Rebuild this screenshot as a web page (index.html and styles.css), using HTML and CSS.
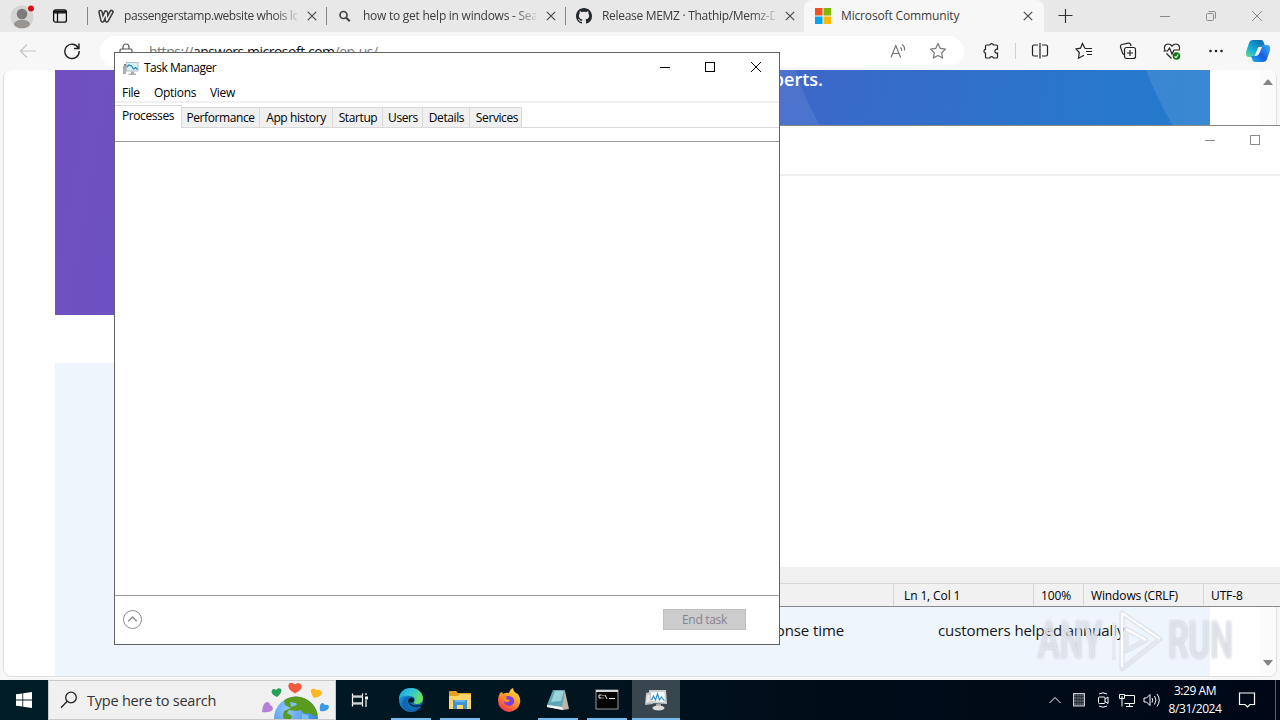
FILE: index.html
```html
<!DOCTYPE html>
<html lang="en">
<head>
    <meta charset="UTF-8">
    <meta name="viewport" content="width=device-width, initial-scale=1.0">
    <title>Desktop</title>
    <link rel="stylesheet" href="styles.css">
</head>
<body>

<div class="desktop">

    <!-- Browser -->
    <div class="window browser">
        <div class="tab-strip">
            <div class="strip-left">
                <svg class="profile" width="26" height="26" viewBox="0 0 26 26">
                    <circle cx="12" cy="14" r="11.5" fill="#d6d4d2"/>
                    <circle cx="12" cy="11" r="5.3" fill="#7d7a78"/>
                    <ellipse cx="12" cy="21" rx="8" ry="4.3" fill="#979492"/>
                    <circle cx="21" cy="5.5" r="3" fill="#d80f1c"/>
                </svg>
                <svg class="workspaces" width="16" height="16" viewBox="0 0 16 16" fill="none" stroke="#111" stroke-width="1.3">
                    <rect x="1.6" y="1.8" width="12.8" height="12.4" rx="2"/>
                    <path d="M2 3.5h12" stroke-width="2"/>
                    <path d="M2 4.8h12M5.500 5v9"/>
                </svg>
            </div>
            <div class="tab">
                <svg class="favicon" width="16" height="16" viewBox="0 0 16 16" fill="none" stroke-linecap="round" stroke-linejoin="round">
                    <path d="M2.500 4l2 8.500L8 4.500l.8 8L13.500 4" stroke="#3c3c3c" stroke-width="4.600"/>
                    <path d="M2.500 4l2 8.500L8 4.500l.8 8L13.500 4" stroke="#eee" stroke-width="1.500"/>
                </svg>
                <span class="tab-title fade t1">passengerstamp.website whois lookup</span>
                <svg class="tab-close" width="10" height="10" viewBox="0 0 10 10"><path d="M.8.8l8.400 8.400M9.200.8L.8 9.200"/></svg>
            </div>
            <div class="tab">
                <svg class="favicon" width="16" height="16" viewBox="0 0 16 16" fill="none" stroke="#444" stroke-width="1.700">
                    <circle cx="6.500" cy="7" r="3.500"/><path d="M9.200 9.700l3.600 3.600" stroke-width="2.200"/>
                </svg>
                <span class="tab-title fade t2">how to get help in windows - Search</span>
                <svg class="tab-close" width="10" height="10" viewBox="0 0 10 10"><path d="M.8.8l8.400 8.400M9.200.8L.8 9.200"/></svg>
            </div>
            <div class="tab">
                <svg class="favicon" width="16" height="16" viewBox="0 0 16 16" fill="#24292f">
                    <path d="M8 0C3.580 0 0 3.580 0 8c0 3.540 2.290 6.530 5.470 7.590.4.070.55-.17.55-.38 0-.19-.01-.82-.01-1.490-2.010.37-2.530-.49-2.690-.94-.09-.23-.48-.94-.82-1.130-.28-.15-.68-.52-.01-.53.63-.01 1.080.58 1.230.82.72 1.210 1.870.87 2.330.66.07-.52.28-.87.51-1.070-1.780-.2-3.640-.89-3.640-3.950 0-.87.31-1.590.82-2.150-.08-.2-.36-1.020.08-2.120 0 0 .67-.21 2.200.82.64-.18 1.320-.27 2-.27s1.360.09 2 .27c1.530-1.040 2.200-.82 2.200-.82.44 1.100.16 1.920.08 2.120.51.56.82 1.270.82 2.150 0 3.070-1.870 3.750-3.650 3.950.29.25.54.73.54 1.480 0 1.070-.01 1.930-.01 2.200 0 .21.15.46.55.38A8.010 8.010 0 0 0 16 8c0-4.420-3.580-8-8-8z"/>
                </svg>
                <span class="tab-title fade t3">Release MEMZ · Thathip/Memz-Download</span>
                <svg class="tab-close" width="10" height="10" viewBox="0 0 10 10"><path d="M.8.8l8.400 8.400M9.200.8L.8 9.200"/></svg>
            </div>
            <div class="tab active">
                <svg class="favicon" width="16" height="16" viewBox="0 0 16 16">
                    <path fill="#f25022" d="M0 0h7.500v7.500H0z"/><path fill="#7fba00" d="M8.500 0H16v7.500H8.500z"/>
                    <path fill="#00a4ef" d="M0 8.500h7.500V16H0z"/><path fill="#ffb900" d="M8.500 8.500H16V16H8.500z"/>
                </svg>
                <span class="tab-title t4">Microsoft Community</span>
                <svg class="tab-close" width="10" height="10" viewBox="0 0 10 10"><path d="M.8.8l8.400 8.400M9.200.8L.8 9.200"/></svg>
            </div>
            <svg class="new-tab" width="16" height="16" viewBox="0 0 16 16" stroke="#333" stroke-width="1.200"><path d="M7.500 1v14M.5 7.500h14"/></svg>
            <div class="captions dim">
                <svg width="12" height="12" viewBox="0 0 12 12"><path d="M1 6.500h10"/></svg>
                <svg width="12" height="12" viewBox="0 0 12 12"><rect x="1.500" y="3.500" width="7" height="7" rx="1"/><path d="M3.500 1.500H9a1.500 1.500 0 0 1 1.500 1.500v5.500"/></svg>
                <svg width="12" height="12" viewBox="0 0 12 12"><path d="M1 1l10 10M11 1L1 11"/></svg>
            </div>
        </div>

        <div class="toolbar">
            <svg class="back" width="18" height="16" viewBox="0 0 18 16" fill="none" stroke="#c5c5c5" stroke-width="1.200"><path d="M17 8H2M8 1.500L1.500 8 8 14.500"/></svg>
            <svg class="reload" width="18" height="18" viewBox="0 0 18 18" fill="none" stroke="#222" stroke-width="1.400"><path d="M15.500 6.200A7.200 7.200 0 1 0 16.200 9M16 1.500v5h-5"/></svg>
            <div class="address">
                <svg class="lock" width="14" height="16" viewBox="0 0 14 16" fill="none" stroke="#555" stroke-width="1.200"><rect x="1" y="6" width="12" height="9" rx="1.500"/><path d="M4 6V4a3 3 0 0 1 6 0v2"/><circle cx="7" cy="10.500" r=".8"/></svg>
                <span class="url">https://<b>answers.microsoft.com</b>/en-us/</span>
                <svg class="read" width="18" height="16" viewBox="0 0 18 16" fill="none" stroke="#777" stroke-width="1.200"><path d="M1 14.500L5.800 2.500l4.800 12M2.800 10.500h6M10.500 4.500a4 4 0 0 1 1.200 3.500M12 1.500a6 6 0 0 1 2.500 6"/></svg>
                <svg class="star" width="18" height="18" viewBox="0 0 18 18" fill="none" stroke="#777" stroke-width="1.200" stroke-linejoin="round"><path d="M9 1.500l2.300 4.900 5.200.7-3.800 3.700.9 5.300L9 13.500l-4.600 2.600.9-5.300L1.500 7.100l5.200-.7z"/></svg>
            </div>
            <div class="tools">
                <svg width="18" height="18" viewBox="0 0 18 18"><path d="M4.500 3h3.200a2 2 0 0 1 3.800 0h3q1 0 1 1v3.300a2 2 0 1 0 0 3.800V15q0 1-1 1h-3a2 2 0 0 0-3.800 0H4.500q-1 0-1-1v-3.800a2 2 0 0 1 0-3.900V4q0-1 1-1z"/></svg>
                <i class="tool-sep"></i>
                <svg width="18" height="18" viewBox="0 0 18 18"><path d="M7 3H3q-1.500 0-1.500 1.500v8Q1.500 14 3 14h4M11 3h4q1.500 0 1.500 1.500v8q0 1.500-1.500 1.500h-4M9 1v15.500"/></svg>
                <svg width="18" height="18" viewBox="0 0 18 18"><path d="M10 6.500h7M11 9.500h6M12 12.500h5M10 6.500L7.500 1.500 5.500 6.200l-4.500.7 3.300 3.600-.8 5.700 5.500-3"/></svg>
                <svg width="18" height="18" viewBox="0 0 18 18"><path d="M5 12.500l-1.300-.8L1.500 5a2 2 0 0 1 1.400-2.500l6.400-1.300a2 2 0 0 1 2.300 1.300l.4 1.500"/><rect x="5.500" y="5.500" width="11" height="11" rx="2"/><path d="M11 8v6M8 11h6"/></svg>
                <svg width="18" height="18" viewBox="0 0 18 18"><path d="M2 8.500C.5 5 2 2 5 2c2 0 3 .8 4 2 1-1.200 2-2 4-2 3 0 4.500 3 3 6.500M3.500 11.500l5 5M.5 9h4l2-3 2.500 6 2-4h4.500"/><circle cx="13.500" cy="14" r="3.800" fill="#107c10" stroke="none"/><path d="M11.700 14.500l1.300 1 2.300-3" stroke="#fff"/></svg>
                <svg width="18" height="18" viewBox="0 0 18 18"><g fill="#222" stroke="none"><circle cx="3.500" cy="9" r="1.300"/><circle cx="9" cy="9" r="1.300"/><circle cx="14.500" cy="9" r="1.300"/></g></svg>
                <svg class="copilot" width="26" height="24" viewBox="0 0 26 24">
                    <defs>
                        <linearGradient id="cp1" x1="0" y1="1" x2=".7" y2="0"><stop offset="0" stop-color="#73df8a"/><stop offset=".4" stop-color="#18b4d5"/><stop offset="1" stop-color="#0a70b5"/></linearGradient>
                        <linearGradient id="cp2" x1="0" y1="1" x2="1" y2="0"><stop offset="0" stop-color="#17b8ec"/><stop offset=".45" stop-color="#175de0"/><stop offset="1" stop-color="#39b2f2"/></linearGradient>
                    </defs>
                    <path d="M8 1h8q2 0 2.600 2L20 7h-3q-2 0-3 3l-2 5q-1 3-4 3H4q-4 0-3-5L4 4q1-3 4-3z" fill="url(#cp1)" stroke="none"/>
                    <path d="M18 23h-8q-2 0-2.600-2L6 17h3q2 0 3-3l2-4q1-4 4-4h4q4 0 3 5l-3 9q-1 3-4 3z" fill="url(#cp2)" stroke="none"/>
                    <path d="M13.500 8h3.500l-3 7q-1 2-4 2h-.5l3-7q.3-1 1-2z" fill="#f7f7f7" stroke="none"/>
                </svg>
            </div>
        </div>

        <div class="viewport">
            <div class="page">
                <div class="banner">
                    <svg class="banner-shapes" width="1155" height="245" viewBox="0 0 1155 245">
                        <path d="M600 0h141q8 28 24 56H600z" fill="#fff" opacity=".08"/>
                        <path d="M1091 0h64v110Q1112 55 1091 0z" fill="#fff" opacity=".1"/>
                    </svg>
                    <p class="banner-text">Find answers from experts.</p>
                </div>
                <div class="stats">
                    <span class="stat stat-time">response time</span>
                    <span class="stat stat-customers">customers helped annually</span>
                </div>
            </div>
            <div class="scrollbar">
                <svg width="10" height="6" viewBox="0 0 10 6"><path d="M0 6l4-5q1-1 2 0l4 5z" fill="#858585"/></svg>
                <svg width="10" height="6" viewBox="0 0 10 6"><path d="M0 0l4 5q1 1 2 0l4-5z" fill="#858585"/></svg>
            </div>
        </div>
    </div>

    <!-- Notepad, runs past the right edge of the screen -->
    <div class="window notepad">
        <div class="notepad-top">
            <div class="captions dim">
                <svg width="12" height="12" viewBox="0 0 12 12"><path d="M1 6.500h10"/></svg>
                <svg width="12" height="12" viewBox="0 0 12 12"><rect x="1.500" y="1.500" width="9" height="9"/></svg>
            </div>
        </div>
        <div class="notepad-text"></div>
        <div class="notepad-scroll"></div>
        <div class="notepad-status">
            <span class="cell-pad"></span>
            <span class="cell-pos">Ln 1, Col 1</span>
            <span class="cell-zoom">100%</span>
            <span class="cell-eol">Windows (CRLF)</span>
            <span class="cell-enc">UTF-8</span>
        </div>
    </div>

    <!-- Task Manager -->
    <div class="window taskmgr">
        <div class="titlebar">
            <svg class="tm-icon" width="17" height="16" viewBox="0 0 17 16">
                <path d="M1 6h3v8H1z" fill="#a9b0b4"/><path d="M2 4h2v2H2z" fill="#888"/>
                <rect x="4" y="2" width="12.500" height="9.500" fill="#b8bec2"/>
                <rect x="5" y="3" width="10.500" height="7.500" fill="#d5f0fb"/>
                <path d="M5 7l2-2 2.500 1 2 3 2-1.500 2 2" fill="none" stroke="#2186b5" stroke-width="1.200"/>
                <path d="M9 11.500h3v2h2V15H6.500v-1.500H9z" fill="#a9b0b4"/>
            </svg>
            <span class="title">Task Manager</span>
            <div class="captions">
                <svg width="12" height="12" viewBox="0 0 12 12"><path d="M1 6.500h10"/></svg>
                <svg width="12" height="12" viewBox="0 0 12 12"><rect x="1.500" y="1.500" width="9" height="9"/></svg>
                <svg width="12" height="12" viewBox="0 0 12 12"><path d="M1 1l10 10M11 1L1 11"/></svg>
            </div>
        </div>
        <div class="menu">
            <span class="m-file">File</span>
            <span class="m-options">Options</span>
            <span class="m-view">View</span>
        </div>
        <div class="tm-tabs">
            <span class="tm-tab selected w-processes">Processes</span>
            <span class="tm-tab w-performance">Performance</span>
            <span class="tm-tab w-history">App history</span>
            <span class="tm-tab w-startup">Startup</span>
            <span class="tm-tab w-users">Users</span>
            <span class="tm-tab w-details">Details</span>
            <span class="tm-tab w-services">Services</span>
        </div>
        <div class="tm-body"></div>
        <div class="tm-footer">
            <svg width="20" height="20" viewBox="0 0 20 20" fill="none" stroke="#8c8c8c"><circle cx="10.500" cy="9.500" r="9"/><path d="M6.300 11.200L10.500 7l4.200 4.200" stroke-width="1.500"/></svg>
            <button class="end-task" disabled>End task</button>
        </div>
    </div>

    <!-- Watermark -->
    <div class="watermark">
        <span class="wm-any">ANY</span>
        <svg width="60" height="66" viewBox="0 0 60 66" fill="none" stroke-linejoin="round">
            <path d="M18 5L56 31 18 61zM22 21v22l20-11z" stroke="#b9c0ca" stroke-width="5" opacity=".35"/>
            <path d="M18 5L56 31 18 61zM22 21v22l20-11zM10 14v38" stroke="#e4e8ee" stroke-width="3.500" opacity=".9"/>
            <path d="M18 5L56 31M22 21l20 11M18 5v54" stroke="#fff" stroke-width="2"/>
        </svg>
        <span class="wm-run">RUN</span>
    </div>

    <!-- Taskbar -->
    <div class="taskbar">
        <div class="start">
            <svg width="16" height="16" viewBox="0 0 16 16" fill="#fff"><path d="M0 2.300L6.400 1.400v6.200H0zM7.200 1.300L16 0v7.600H7.200zM0 8.400h6.400v6.200L0 13.700zM7.200 8.400H16V16l-8.800-1.300z"/></svg>
        </div>
        <div class="search">
            <svg class="search-icon" width="18" height="18" viewBox="0 0 18 18" fill="none" stroke="#222" stroke-width="1.300"><circle cx="11" cy="6.500" r="5.300"/><path d="M7.200 10.300L1 16.800"/></svg>
            <span class="search-text">Type here to search</span>
            <svg class="globe" width="70" height="38" viewBox="0 0 70 38">
                <defs>
                    <radialGradient id="sea" cx=".3" cy=".3" r=".8"><stop offset="0" stop-color="#8dc6fb"/><stop offset="1" stop-color="#2e78e0"/></radialGradient>
                    <clipPath id="earth"><circle cx="36" cy="37.500" r="22"/></clipPath>
                </defs>
                <circle cx="36" cy="37.500" r="22" fill="url(#sea)"/>
                <g clip-path="url(#earth)">
                    <path d="M26 17q8-4 16-1 12 3 16 18l-4 1-5-3-5 1-3-4-5 1-7-1-2 3 5 3-2 4h-6l-1-5 1-4 7-3-6-3-1-4z" fill="#5a9a1c"/>
                    <path d="M30 21l6 1 1 2-6 2zM42 33l6 1 1 5h-7z" fill="#7fbcf8"/>
                </g>
                <path d="M35 12.500q-9-5-6-10 3-2 6 1 3-3 6 0 3 4-6 9z" fill="#f4583c"/>
                <path d="M17 16q-7-3-5-7 2-2 4 0 2-3 5-1 2 3-4 8z" fill="#28a05a"/>
                <path d="M54 17q-5-7-2-9 3-1 4 1 4-1 6 2 1 4-8 6z" fill="#fcb91f"/>
                <path d="M2 31q1-10 5-10 3 0 3 3 3 1 3 4-2 4-11 3z" fill="#b480d8"/>
                <path d="M60 30q-1-7 2-8 2 0 3 2 4-1 4 2-1 5-9 4z" fill="#3b9ae0"/>
            </svg>
        </div>
        <div class="task-item">
            <svg width="18" height="18" viewBox="0 0 18 18" fill="none" stroke="#fff" stroke-width="1.200"><path d="M1.500 2.500V5h10V2.500M1.500 15.500V13h10v2.500"/><rect x="1.500" y="6" width="10" height="6"/><path d="M15 2v2M15 9v7"/><path d="M14 5.500h3v3h-3z" fill="#fff" stroke="none"/></svg>
        </div>
        <div class="apps">
            <div class="task-item open">
                <svg width="26" height="26" viewBox="0 0 26 26">
                    <defs>
                        <linearGradient id="edgeTop" x1="0" y1="0" x2="1" y2=".5"><stop offset="0" stop-color="#1a9fda"/><stop offset=".5" stop-color="#30c5da"/><stop offset="1" stop-color="#6be05a"/></linearGradient>
                        <linearGradient id="edgeLow" x1="0" y1="0" x2="1" y2="1"><stop offset="0" stop-color="#1b9bdf"/><stop offset="1" stop-color="#0c59a4"/></linearGradient>
                    </defs>
                    <circle cx="13" cy="13" r="12" fill="url(#edgeLow)"/>
                    <path d="M1 11C2 4 7 1 13 1c7 0 12 5 12 10 0 4-3 6-6 6-2 0-4-1-3-2 2-2 1-6-4-6-5-1-9 0-11 3z" fill="url(#edgeTop)"/>
                    <path d="M10 13c-2 5 2 11 10 9-5 4-15 3-16-5 0-5 4-8 8-7-1 1-2 1-2 3z" fill="#1267b4"/>
                    <path d="M11 12c-1 4 3 8 12 6l2-2v2l-2 1c-5 2-13 0-13-5q0-2 1-2z" fill="#001b28"/>
                    <circle cx="13.500" cy="13" r="2.600" fill="#001b28"/>
                </svg>
            </div>
            <div class="task-item open">
                <svg width="24" height="24" viewBox="0 0 24 24"><path d="M1 4q0-1 1-1h6l2 2h13v5H1z" fill="#e6a01c"/><path d="M1 8h9l2-2h11v15H1z" fill="#ffd468"/><path d="M5 12h14v9h-4v-4H9v4H5z" fill="#3d94d6"/><path d="M7 12h10v2H7z" fill="#68b5e5"/></svg>
            </div>
            <div class="task-item">
                <svg width="24" height="24" viewBox="0 0 24 24">
                    <defs><linearGradient id="fox" x1=".8" y1="0" x2=".2" y2="1"><stop offset="0" stop-color="#ffe048"/><stop offset=".45" stop-color="#ff9722"/><stop offset="1" stop-color="#f52b57"/></linearGradient></defs>
                    <path d="M3 5l2-1 1 2q3-2 6-1 1-4 4-5 0 3 3 5l2 1q3 5 2 9-2 8-11 9Q1 22 1 12q0-4 2-7z" fill="url(#fox)"/>
                    <path d="M8 9q3-2 7 0 3 2 2 6-2 3-5 3-5-1-5-5l3-1q-2 0-2-3z" fill="#7b3de0"/>
                    <path d="M5 9q3-1 5 0l-1 2 4 1q-1 3-5 2z" fill="#ff8a22"/>
                </svg>
            </div>
            <div class="task-item open">
                <svg width="24" height="24" viewBox="0 0 24 24"><path d="M7 3h12l4 18-6 1L1 19z" fill="#b9b7a8"/><path d="M7 2h12l-3 17L1 17z" fill="#5ba7b3"/><path d="M9 3h9l-3 10-10 1z" fill="#9bd3d9"/><path d="M1 17l15 2 1 3-16-3z" fill="#f4f6f6"/></svg>
            </div>
            <div class="task-item open">
                <svg width="24" height="22" viewBox="0 0 24 22"><rect x="1" y="1" width="22" height="19" fill="#050505" stroke="#979797"/><path d="M1 1h22v2H1z" fill="#d7d7d7"/><path d="M6.500 6H4v3h2.500M8 6v1M8 8.500v1M10 6l2 4M14 9.500h6" fill="none" stroke="#eee"/></svg>
            </div>
            <div class="task-item open current">
                <svg width="24" height="24" viewBox="0 0 24 24"><path d="M2 5l7-2v13l-8 1z" fill="#b9bcbb"/><path d="M3 7l3-1v8l-4 1z" fill="#e8e8e6"/><path d="M5 2h17l1 14-17-1z" fill="#c9cdce"/><path d="M7 4h13.500l.5 10-13.500-1z" fill="#f4fbff"/><path d="M7.500 12l2-4 2 4 2-6 2 6 2-3 3 4" fill="none" stroke="#3290c5" stroke-width="1.200"/><path d="M12 16h5v3h-5z" fill="#a5a5a5"/><ellipse cx="14.500" cy="20" rx="6" ry="2.400" fill="#dcdbd7"/></svg>
            </div>
        </div>
        <div class="tray">
            <svg width="16" height="16" viewBox="0 0 16 16"><path d="M2.500 11L8 5.500l5.500 5.500"/></svg>
            <svg width="16" height="16" viewBox="0 0 16 16"><rect x="2.500" y="1.500" width="11" height="12.500" fill="#585e66" stroke="#c9ccd0"/><path d="M5.500 2v11M8 2v11M10.500 2v11M3 4.500h10M3 7.500h10M3 10.500h10" stroke="#262c34" stroke-width=".8"/></svg>
            <svg width="16" height="16" viewBox="0 0 16 16"><rect x="3.500" y="5" width="6.500" height="6.500" rx="1"/><path d="M10 7l3-2v6.500l-3-2M4 2q4-2.500 8 0M4 14q4 2.500 8 0"/></svg>
            <svg width="16" height="16" viewBox="0 0 16 16"><path d="M5.500 3.500h10v8h-10M10.500 11.500v3M7 14.500h7"/><path d="M.5 2.500h5v4h-5zM3 6.500v8M3 4v2"/></svg>
            <svg width="18" height="16" viewBox="0 0 18 16"><path d="M1 6h2.500L7 2.500v11L3.500 10H1zM9 6q1.500 2 0 4.500M11.500 4q3 4 0 8.500M14 2q4.500 6 0 12.500"/></svg>
        </div>
        <div class="clock">
            <span class="time">3:29 AM</span>
            <span class="date">8/31/2024</span>
        </div>
        <div class="notify">
            <svg width="18" height="18" viewBox="0 0 18 18" fill="none" stroke="#fff" stroke-width="1.200"><path d="M1.500 2h15v11.500H12L9.500 16 7 13.500H1.500z"/></svg>
        </div>
        <div class="show-desktop"></div>
    </div>
</div>

</body>
</html>
```
FILE: styles.css
```css
body {
    margin: 0;
    overflow: hidden;
    font-family: 'Open Sans', 'Noto Sans', sans-serif;
    font-size: 12px;
    color: #000;
}

svg {
    display: block;
    flex: none;
}

span {
    white-space: nowrap;
}

.desktop {
    position: relative;
    width: 1280px;
    height: 720px;
    overflow: hidden;
}

.window {
    position: absolute;
    box-sizing: border-box;
    display: flex;
    flex-direction: column;
}

.captions {
    display: flex;
    margin-left: auto;
    fill: none;
    stroke: #000;
}

.captions svg {
    margin: 0 17px;
}

.captions.dim {
    stroke: #8b8b8b;
}

/* Browser */

.browser {
    left: 0;
    top: 0;
    width: 1280px;
    height: 680px;
    background: #f7f7f7;
}

.tab-strip {
    display: flex;
    align-items: center;
    height: 32px;
    background: #e8e8e8;
}

.strip-left {
    display: flex;
    align-items: center;
    width: 87px;
}

.profile {
    margin: 0 16px 0 10px;
}

.tab {
    display: flex;
    align-items: center;
    box-sizing: border-box;
    width: 239px;
    height: 18px;
    padding-left: 10px;
    border-left: 1px solid #858585;
}

.tab.active {
    width: 240px;
    height: 32px;
    padding-left: 11px;
    border-left: 0;
    border-radius: 8px 8px 0 0;
    background: #f7f7f7;
}

.favicon {
    margin-right: 10px;
}

.tab-title {
    width: 173px;
    overflow: hidden;
    color: #3b3b3b;
    line-height: 18px;
}

.active .tab-title {
    width: 178px;
}

.fade {
    -webkit-mask-image: linear-gradient(90deg, #000 150px, transparent 178px);
    mask-image: linear-gradient(90deg, #000 150px, transparent 178px);
}

.t1 {
    letter-spacing: -0.42px;
}

.t2 {
    letter-spacing: -0.25px;
}

.t3 {
    letter-spacing: -0.3px;
}

.t4 {
    letter-spacing: -0.15px;
}

.tab-close {
    margin-left: 10px;
    stroke: #4a4a4a;
    stroke-width: 1.2;
}

.active .tab-close {
    margin-left: 4px;
}

.new-tab {
    margin-left: 14px;
}

.toolbar {
    display: flex;
    align-items: center;
    height: 38px;
}

.back {
    margin-left: 19px;
}

.reload {
    margin-left: 26px;
}

.address {
    display: flex;
    align-items: center;
    box-sizing: border-box;
    width: 864px;
    height: 31px;
    margin-left: 19px;
    padding: 0 17px 0 19px;
    border-radius: 16px;
    background: #fff;
}

.url {
    margin-left: 16px;
    font-size: 14px;
    letter-spacing: -0.48px;
    color: #767676;
}

.url b {
    font-weight: normal;
    color: #111;
}

.read {
    margin-left: auto;
}

.star {
    margin-left: 21px;
}

.tools {
    display: flex;
    align-items: center;
    margin-left: 18px;
    fill: none;
    stroke: #222;
    stroke-width: 1.2;
}

.tools svg {
    margin-right: 26px;
}

.tools svg:first-child {
    margin-right: 15px;
}

.tool-sep {
    width: 1px;
    height: 16px;
    margin-right: 15px;
    background: #d0d0d0;
}

.tools .copilot {
    margin: 0 0 0 -6px;
}

.viewport {
    display: flex;
    box-sizing: border-box;
    width: 1274px;
    height: 607px;
    margin-left: 3px;
    padding-left: 51px;
    border: 1px solid #e0e0e0;
    border-top: 0;
    border-radius: 8px;
    background: #fff;
    overflow: hidden;
}

.page {
    width: 1155px;
}

.banner {
    position: relative;
    display: flex;
    height: 245px;
    background: linear-gradient(100deg, #7050c0 0%, #6854c5 25%, #396ac9 66%, #2877cc 87%, #217dcc 100%);
}

.banner-shapes {
    position: absolute;
    left: 0;
    top: 0;
}

.banner-text {
    width: 768px;
    margin: 0;
    font-size: 18px;
    font-weight: 600;
    line-height: 18px;
    text-align: right;
    color: #fff;
}

.stats {
    display: flex;
    box-sizing: border-box;
    height: 313px;
    margin-top: 48px;
    padding-top: 256px;
    background: #eff5fd;
}

.stat {
    font-size: 15px;
    line-height: 22px;
    letter-spacing: -0.1px;
    color: #151515;
}

.stat-time {
    width: 789px;
    text-align: right;
}

.stat-customers {
    margin-left: 94px;
}

.scrollbar {
    display: flex;
    flex-direction: column;
    justify-content: space-between;
    align-items: center;
    width: 16px;
    margin-left: auto;
    padding: 9px 0 10px;
    background: #fbfbfb;
}

/* Notepad */

.notepad {
    left: 500px;
    top: 125px;
    width: 824px;
    height: 482px;
    border: 1px solid #888;
    background: #fff;
}

.notepad-top {
    display: flex;
    box-sizing: border-box;
    height: 50px;
    padding: 8px 45px 0 0;
    border-bottom: 2px solid #eee;
}

.notepad-top .captions svg {
    margin: 0 17px 0 16px;
}

.notepad-text {
    flex: 1;
}

.notepad-scroll {
    height: 16px;
    background: #f0f0f0;
}

.notepad-status {
    display: flex;
    height: 22px;
    line-height: 23px;
    letter-spacing: -0.12px;
    border-top: 1px solid #d8d8d8;
    background: #f1f1f1;
}

.notepad-status span {
    box-sizing: border-box;
    border-right: 1px solid #d5d5d5;
}

.cell-pad {
    width: 393px;
}

.cell-pos {
    width: 140px;
    padding-left: 10px;
}

.cell-zoom {
    width: 50px;
    padding-left: 7px;
}

.cell-eol {
    width: 120px;
    padding-left: 7px;
}

.cell-enc {
    width: 119px;
    padding-left: 7px;
}

/* Task Manager */

.taskmgr {
    left: 114px;
    top: 52px;
    width: 666px;
    height: 593px;
    border: 1px solid #626262;
    background: #fff;
}

.titlebar {
    display: flex;
    align-items: center;
    height: 29px;
    padding-left: 7px;
}

.title {
    margin-left: 5px;
    letter-spacing: -0.5px;
}

.titlebar .captions {
    margin-bottom: 2px;
}

.titlebar .captions svg:first-child {
    margin-right: 16px;
}

.menu {
    display: flex;
    box-sizing: border-box;
    height: 21px;
    padding-left: 7px;
    line-height: 21px;
    letter-spacing: -0.3px;
    border-bottom: 2px solid #f0f0f0;
}

.m-file {
    width: 32px;
}

.m-options {
    width: 56px;
}

.tm-tabs {
    display: flex;
    align-items: flex-end;
    height: 24px;
    letter-spacing: -0.4px;
    border-bottom: 1px solid #d9d9d9;
}

.tm-tab {
    box-sizing: border-box;
    height: 20px;
    line-height: 20px;
    text-align: center;
    border: 1px solid #d9d9d9;
    border-left: 0;
    border-bottom: 0;
    background: #f0f0f0;
}

.tm-tab.selected {
    height: 23px;
    margin-bottom: -1px;
    line-height: 20px;
    background: #fff;
}

.w-processes {
    width: 67px;
}

.w-performance {
    width: 78px;
}

.w-history {
    width: 73px;
}

.w-startup {
    width: 50px;
    padding-left: 1px;
}

.w-users {
    width: 40px;
    padding-left: 1px;
}

.w-details {
    width: 47px;
    padding-left: 1px;
}

.w-services {
    width: 52px;
    padding-left: 3px;
}

.tm-body {
    flex: 1;
    margin-top: 13px;
    border-top: 1px solid #999;
    border-bottom: 1px solid #999;
}

.tm-footer {
    display: flex;
    align-items: center;
    justify-content: space-between;
    box-sizing: border-box;
    height: 48px;
    padding: 0 33px 1px 7px;
}

.end-task {
    width: 83px;
    height: 21px;
    padding: 0;
    border: 1px solid #bfbfbf;
    background: #ccc;
    font: inherit;
    line-height: 19px;
    letter-spacing: -0.3px;
    color: #838391;
}

/* Watermark */

.watermark {
    position: absolute;
    left: 1038px;
    top: 608px;
    display: flex;
    align-items: center;
    font-family: Roboto, sans-serif;
    font-size: 51px;
    font-weight: 500;
    line-height: 66px;
    color: rgba(240, 243, 247, 0.65);
    text-shadow: 0 0 3px rgba(160, 167, 177, 0.75);
}

.watermark svg {
    margin: 0 4px 0 6px;
}

.wm-any,
.wm-run {
    width: 60px;
    transform: scaleX(0.64);
    transform-origin: left center;
}

/* Taskbar */

.taskbar {
    position: absolute;
    left: 0;
    top: 680px;
    display: flex;
    width: 1280px;
    height: 40px;
    background: linear-gradient(90deg, #001d28 0%, #001722 35%, #000d19 65%, #000817 100%);
    color: #fff;
}

.start,
.notify {
    display: flex;
    align-items: center;
    justify-content: center;
    width: 48px;
}

.search {
    display: flex;
    align-items: center;
    box-sizing: border-box;
    width: 288px;
    border: 1px solid #c9c9c9;
    background: #f0f0f0;
    color: #333;
}

.search-icon {
    margin-left: 11px;
}

.search-text {
    margin-left: 9px;
    font-size: 14.5px;
    letter-spacing: -0.22px;
}

.globe {
    align-self: flex-end;
    margin-left: auto;
    margin-right: 5px;
}

.task-item {
    display: flex;
    align-items: center;
    justify-content: center;
    box-sizing: border-box;
    width: 48px;
    height: 40px;
}

.apps {
    display: flex;
    gap: 1px;
    margin-left: 3px;
}

.open {
    background: linear-gradient(#76b9ed, #76b9ed) center bottom / 40px 2px no-repeat;
}

.current {
    background: linear-gradient(#76b9ed, #76b9ed) center bottom / 48px 2px no-repeat #38474f;
}

.tray {
    display: flex;
    align-items: center;
    gap: 8px;
    margin-left: auto;
    margin-right: 5px;
    fill: none;
    stroke: #fff;
}

.clock {
    display: flex;
    flex-direction: column;
    align-items: center;
    width: 58px;
    padding-top: 2px;
    line-height: 18px;
    letter-spacing: -0.45px;
}

.notify {
    width: 46px;
}

.show-desktop {
    width: 4px;
    margin-left: 5px;
    border-left: 1px solid #54616a;
}
```
